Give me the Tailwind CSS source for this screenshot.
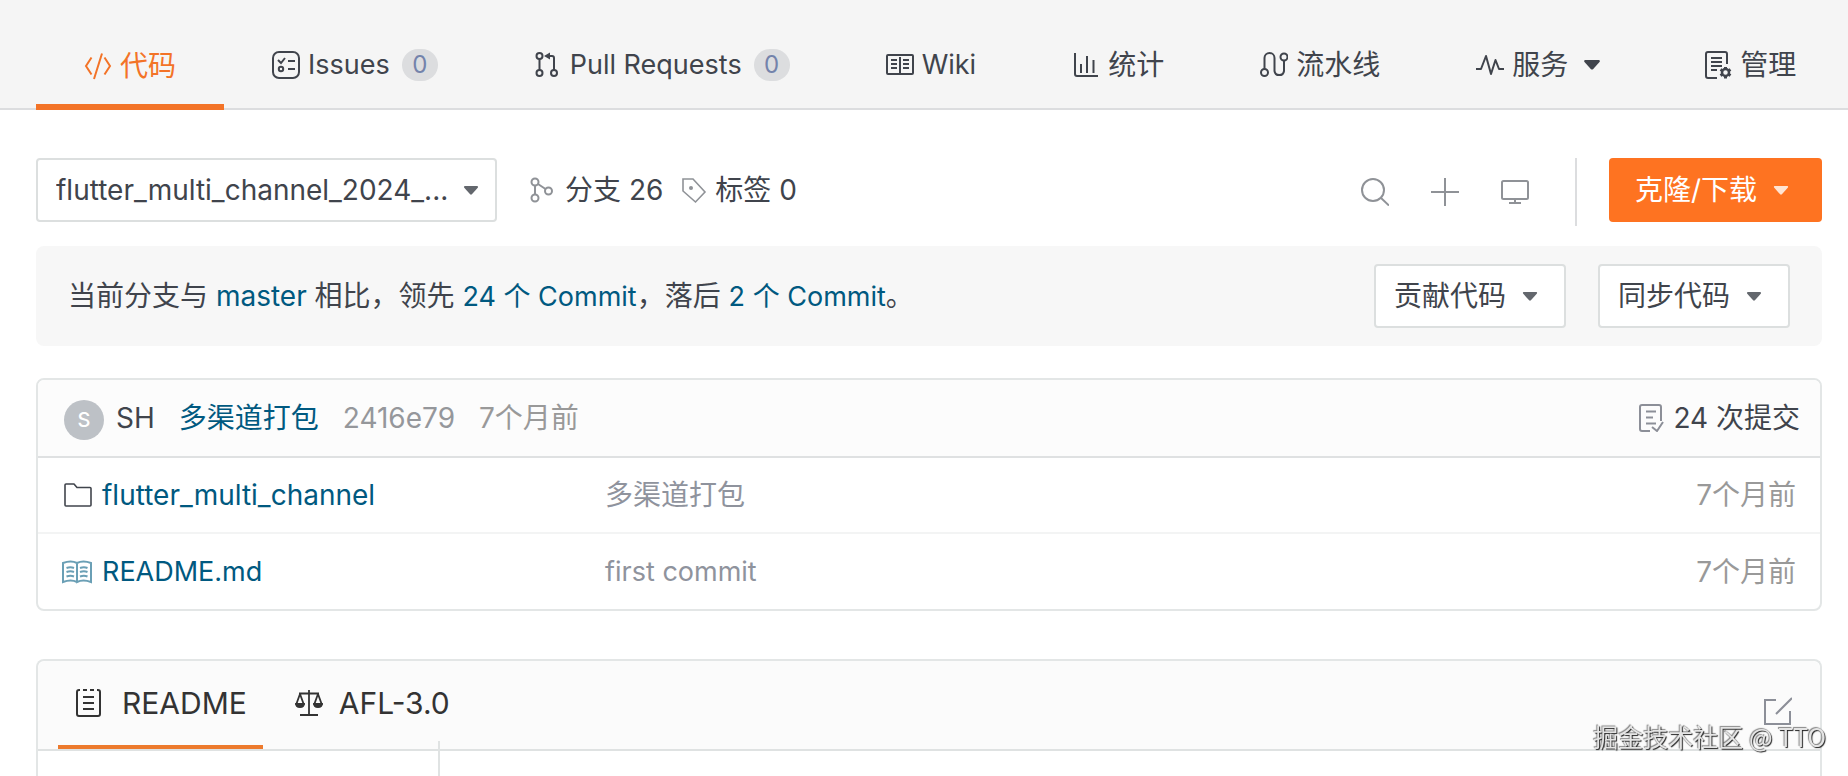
<!DOCTYPE html>
<html lang="zh-CN">
<head>
    <meta charset="UTF-8">
    <meta name="viewport" content="width=device-width, initial-scale=1.0">
    <title>flutter_multi_channel</title>
    <script src="https://cdn.jsdelivr.net/npm/@tailwindcss/browser@4"></script>
</head>
<body class="flex min-h-screen flex-col bg-white font-['Inter','Noto_Sans_CJK_SC',sans-serif] text-[28px] leading-8 text-[#40444c]">

    <!-- Repository navigation -->
    <nav class="flex h-[110px] items-stretch justify-between border-b-2 border-[#dcdddf] bg-[#f5f5f5] pl-9 pr-1 whitespace-nowrap">
        <a href="#" class="-mb-0.5 flex items-center gap-2 border-b-6 border-[#f37327] px-12 pt-7 text-[#f37327]">
            <svg class="size-7" viewBox="0 0 28 28" fill="none" stroke="currentColor" stroke-width="2"><path d="M7.500 5.500L2 14l5.500 8.500M20.500 5.500L26 14l-5.500 8.500M18 1.500L10 27"/></svg>
            代码
        </a>
        <a href="#" class="flex items-center gap-2 px-12 pt-[22px]">
            <svg class="size-7" viewBox="0 0 28 28" fill="none" stroke="currentColor" stroke-width="2"><rect x="1" y="1" width="26" height="26" rx="6"/><path d="M6 9l3 3 4-5M16 10h7M16 18h7"/><circle cx="9" cy="18" r="2.200"/></svg>
            <span class="text-[27px]">Issues</span>
            <span class="ml-1 flex h-8 w-9 items-center justify-center rounded-full bg-[#dcdddf] text-2xl text-[#7483ab]">0</span>
        </a>
        <a href="#" class="flex items-center gap-2 px-12 pt-[22px]">
            <svg class="size-7" viewBox="0 0 28 28" fill="none" stroke="currentColor" stroke-width="2"><circle cx="5.500" cy="5" r="3"/><circle cx="5.500" cy="22" r="3"/><circle cx="20" cy="22" r="3"/><path d="M5.500 8V19M20 19V7q0-2-2-2h-4"/><path d="M10 5l6-3.500v7z" fill="currentColor" stroke="none"/></svg>
            <span class="text-[27px]">Pull Requests</span>
            <span class="ml-1 flex h-8 w-9 items-center justify-center rounded-full bg-[#dcdddf] text-2xl text-[#7483ab]">0</span>
        </a>
        <a href="#" class="flex items-center gap-2 px-12 pt-[22px]">
            <svg class="size-7" viewBox="0 0 28 28" fill="none" stroke="currentColor" stroke-width="2"><rect x="1" y="4" width="26" height="19" rx="1"/><path d="M14 6v17M5 9h6M5 13h6M5 17h6M17 9h6M17 13h6M17 17h6"/></svg>
            <span class="text-[27px]">Wiki</span>
        </a>
        <a href="#" class="flex items-center gap-2 px-12 pt-[22px]">
            <svg class="size-7" viewBox="0 0 28 28" fill="none" stroke="currentColor" stroke-width="2"><path d="M3 2v21q0 2 2 2h21M9 13v9M15 5v17M21.500 9v13"/></svg>
            统计
        </a>
        <a href="#" class="flex items-center gap-2 px-12 pt-[22px]">
            <svg class="size-7" viewBox="0 0 28 28" fill="none" stroke="currentColor" stroke-width="2"><circle cx="4.500" cy="21.500" r="3.500"/><circle cx="24" cy="6" r="3.500"/><path d="M4.500 18V7a5 5 0 0 1 10 0v13a4.800 4.800 0 0 0 9.500 0V9.500"/></svg>
            流水线
        </a>
        <a href="#" class="flex items-center gap-2 px-12 pt-[22px]">
            <svg class="size-7" viewBox="0 0 28 28" fill="none" stroke="currentColor" stroke-width="2" stroke-linejoin="round"><path d="M0 18h5L10 5l5 18 4.500-14 3.500 9h5"/></svg>
            服务
            <svg class="mx-2 h-[10px] w-4" viewBox="0 0 16 10" fill="currentColor"><path d="M1 0h14q1.500.5.5 2L9 9.200q-1 .8-2 0L.5 2Q-.5.500 1 0z"/></svg>
        </a>
        <a href="#" class="flex items-center gap-2 px-12 pt-[22px]">
            <svg class="size-7" viewBox="0 0 28 28" fill="none" stroke="currentColor" stroke-width="2"><path d="M13 27H4q-2 0-2-2V3q0-2 2-2h17q2 0 2 2v10M7 7h11M7 11h11M7 15h11M7 19h6"/><circle cx="21.500" cy="21.500" r="3.500" stroke-width="2.500"/><path d="M21.500 16v2M21.500 25v2.500M16.500 18.500l2 1.300M24.500 23.200l2 1.300M16.500 24.500l2-1.300M24.500 19.800l2-1.300" stroke-width="3"/></svg>
            管理
        </a>
    </nav>

    <main class="flex flex-1 flex-col pt-12 pr-[26px] pl-9">

        <!-- Branch toolbar -->
        <div class="flex h-16 items-center">
            <div class="relative h-16 w-[461px]">
                <select aria-label="分支" class="h-full w-full appearance-none rounded border-2 border-[#dcdfdf] bg-white pl-[18px]">
                    <option>flutter_multi_channel_2024_...</option>
                </select>
                <svg class="pointer-events-none absolute top-7 right-[18px] h-[9px] w-4 text-[#63676d]" viewBox="0 0 16 10" fill="currentColor"><path d="M1 0h14q1.500.5.5 2L9 9.200q-1 .8-2 0L.5 2Q-.5.500 1 0z"/></svg>
            </div>
            <a href="#" class="ml-8 flex items-center gap-2">
                <svg class="size-7 text-[#8f9297]" viewBox="0 0 28 28" fill="none" stroke="currentColor" stroke-width="2"><circle cx="6" cy="6" r="3.500"/><circle cx="6" cy="22" r="3.500"/><circle cx="19.500" cy="15" r="3.500"/><path d="M6 9.500v9M9 8l7.500 5"/></svg>
                分支 26
            </a>
            <a href="#" class="ml-4 flex items-center gap-2">
                <svg class="size-7 text-[#8f9297]" viewBox="0 0 28 28" fill="none" stroke="currentColor" stroke-width="1.600"><path d="M4 3h10l12 13-9.500 10L4 15z"/><circle cx="12" cy="12" r="2" fill="currentColor" stroke="none"/></svg>
                标签 0
            </a>
            <div class="ml-auto flex items-center gap-[42px] pr-[46px] text-[#8f9297]">
                <button aria-label="搜索"><svg class="mt-1 size-7" viewBox="0 0 28 28" fill="none" stroke="currentColor" stroke-width="2"><circle cx="12" cy="12" r="11"/><path d="M19.500 19.500L28 27.500"/></svg></button>
                <button aria-label="新建"><svg class="mt-1 size-7" viewBox="0 0 28 28" fill="none" stroke="currentColor" stroke-width="2"><path d="M14 0v28M0 14h28"/></svg></button>
                <button aria-label="Web IDE"><svg class="mt-1 size-7" viewBox="0 0 28 28" fill="none" stroke="currentColor" stroke-width="2"><rect x="1" y="3" width="26" height="18" rx="1.500"/><path d="M14 21v4M8 25h12"/></svg></button>
            </div>
            <div class="-mb-1 h-[68px] border-l-2 border-[#dcdddf]"></div>
            <button class="ml-8 flex h-16 items-center gap-4 rounded bg-[#fe7321] pr-[33px] pl-[26px] text-white">
                克隆/下载
                <svg class="h-[9px] w-4 text-[#ffe4d3]" viewBox="0 0 16 10" fill="currentColor"><path d="M1 0h14q1.500.5.5 2L9 9.200q-1 .8-2 0L.5 2Q-.5.500 1 0z"/></svg>
            </button>
        </div>

        <!-- Branch comparison -->
        <div class="mt-6 flex h-[100px] items-center gap-8 rounded-lg bg-[#f7f7f7] px-8">
            <p class="flex-1">当前分支与 <a href="#" class="text-[#005980]">master</a> 相比，领先 <a href="#" class="text-[27px] text-[#005980]">24 个 Commit</a>，落后 <a href="#" class="text-[27px] text-[#005980]">2 个 Commit</a>。</p>
            <button class="flex h-16 items-center gap-4 rounded border-2 border-[#dcdfdf] bg-white pr-[26px] pl-[18px]">
                贡献代码
                <svg class="h-[9px] w-4 text-[#63676d]" viewBox="0 0 16 10" fill="currentColor"><path d="M1 0h14q1.500.5.5 2L9 9.200q-1 .8-2 0L.5 2Q-.5.500 1 0z"/></svg>
            </button>
            <button class="flex h-16 items-center gap-4 rounded border-2 border-[#dcdfdf] bg-white pr-[26px] pl-[18px]">
                同步代码
                <svg class="h-[9px] w-4 text-[#63676d]" viewBox="0 0 16 10" fill="currentColor"><path d="M1 0h14q1.500.5.5 2L9 9.200q-1 .8-2 0L.5 2Q-.5.500 1 0z"/></svg>
            </button>
        </div>

        <!-- File list -->
        <section class="mt-8 overflow-hidden rounded-lg border-2 border-[#e3e6e6]">
            <div class="flex h-[78px] items-center border-b-2 border-[#dfe1e2] bg-[#fcfcfc] pr-5 pl-[26px]">
                <span class="mt-1 flex size-10 items-center justify-center rounded-full bg-[#bdc1c6] text-xl font-medium text-white">S</span>
                <a href="#" class="ml-3">SH</a>
                <a href="#" class="ml-6 text-[#005980]">多渠道打包</a>
                <a href="#" class="ml-6 text-[#95979b]">2416e79</a>
                <span class="ml-6 text-[#999]">7个月前</span>
                <a href="#" class="ml-auto flex items-center gap-2">
                    <svg class="size-7 text-[#8c8f98]" viewBox="0 0 28 28" fill="none" stroke="currentColor" stroke-width="2"><path d="M13 27H5q-2 0-2-2V3q0-2 2-2h17q2 0 2 2v14M9 7.500h10M9 13.500h7M9 19.500h10M15 23l5 4 6-9"/></svg>
                    24 次提交
                </a>
            </div>
            <table class="w-full table-fixed">
                <tbody>
                    <tr class="h-[75px] border-b-2 border-[#f3f4f4]">
                        <td class="w-[567px] pl-[26px]">
                            <a href="#" class="flex items-center gap-[10px] text-[#005980]">
                                <svg class="size-7 text-[#40444c]" viewBox="0 0 28 28" fill="none" stroke="currentColor" stroke-width="1.600" stroke-linejoin="round"><path d="M1 24V4q0-1 1-1h8l3 3.500h13q1 0 1 1V24q0 1-1 1H2q-1 0-1-1z"/></svg>
                                flutter_multi_channel
                            </a>
                        </td>
                        <td><a href="#" class="text-[#8f939d]">多渠道打包</a></td>
                        <td class="pr-6 text-right text-[#999]">7个月前</td>
                    </tr>
                    <tr class="h-[76px]">
                        <td class="pl-6">
                            <a href="#" class="flex items-center gap-[10px] text-[#005980]">
                                <svg class="h-7 w-[30px] text-[#6a9fb5]" viewBox="0 0 30 28" fill="none" stroke="currentColor" stroke-width="2"><path d="M15 5q-6-3-14 0v19q8-3 14 0M15 5q6-3 14 0v19q-8-3-14 0zM4.500 10q4-1.500 7.500 0M4.500 14q4-1.500 7.500 0M4.500 18.500q4-1.500 7.500 0M18 10q4-1.500 7.500 0M18 14q4-1.500 7.500 0M18 18.500q4-1.500 7.500 0"/></svg>
                                <span class="text-[27px]">README.md</span>
                            </a>
                        </td>
                        <td><a href="#" class="text-[27px] text-[#8f939d]">first commit</a></td>
                        <td class="pr-6 text-right text-[#999]">7个月前</td>
                    </tr>
                </tbody>
            </table>
        </section>

        <!-- Readme panel -->
        <section class="mt-12 flex flex-1 flex-col rounded-t-lg border-2 border-b-0 border-[#e3e6e6]">
            <div class="flex h-[90px] shrink-0 items-stretch rounded-t-lg border-b-2 border-[#dfe2e2] bg-[#fbfbfb] pl-5 text-3xl text-[#333]">
                <button class="flex items-center gap-4 border-b-4 border-[#ed7a2d] px-4">
                    <svg class="mr-1 size-7" viewBox="0 0 28 28" fill="none" stroke="currentColor" stroke-width="2"><path d="M6 1H5Q3 1 3 3v22q0 2 2 2h19q2 0 2-2V3q0-2-2-2h-1M9 1h4M16 1h4M9 8h11M9 14h11M9 20h11"/></svg>
                    README
                </button>
                <button class="ml-4 flex items-center gap-4 border-b-4 border-transparent px-4">
                    <svg class="size-7" viewBox="0 0 28 28" fill="none" stroke="currentColor" stroke-width="1.800"><path d="M14 1v24M5 26h18M4 4.500h20M5 5L1 16M5 5l4 11M23 5l-4 11M23 5l4 11"/><path d="M0 14h10q0 5-5 5t-5-5zM18 14h10q0 5-5 5t-5-5z" fill="currentColor" stroke="none"/></svg>
                    AFL-3.0
                </button>
                <button aria-label="编辑" class="mt-3 ml-auto pr-7">
                    <svg class="size-7 text-[#8c8f98]" viewBox="0 0 28 28" fill="none" stroke="currentColor" stroke-width="2"><path d="M12 3H1v24h25V14M12 17L28 1"/></svg>
                </button>
            </div>
            <div class="flex flex-1">
                <div class="-mt-[10px] w-[402px] border-r-2 border-[#e0e3e3]"></div>
            </div>
        </section>
    </main>

    <div class="pointer-events-none fixed right-[22px] bottom-6 font-['Noto_Sans_CJK_SC',sans-serif] text-[25px] text-[#e4e4e4] [text-shadow:1px_1px_1px_#222,-1px_-1px_1px_#888]">掘金技术社区 @ TTO</div>

</body>
</html>
